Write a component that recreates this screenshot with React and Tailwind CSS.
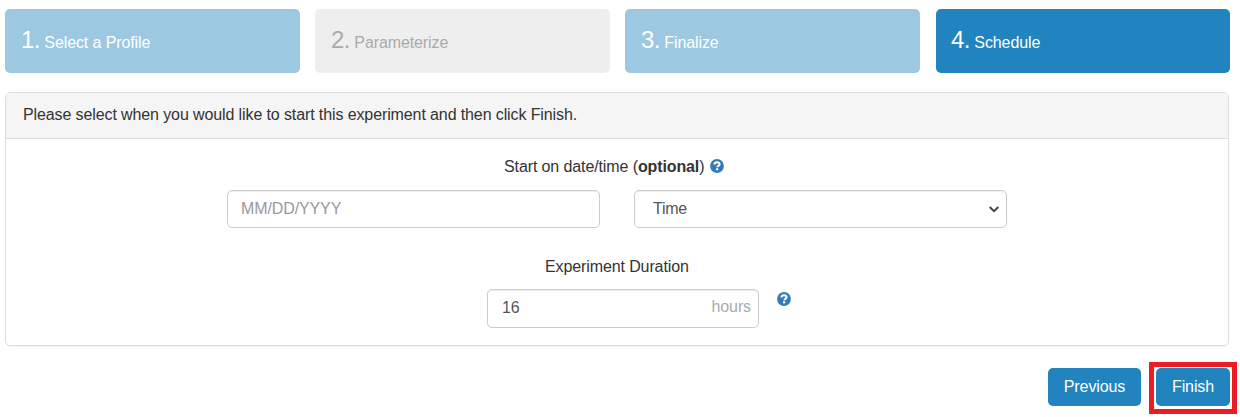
const steps = [
  { n: "1.", label: "Select a Profile", box: "w-[295px] pl-4 bg-[#9dc8e2] text-white" },
  { n: "2.", label: "Parameterize", box: "w-[295px] pl-4 bg-[#eeeeee] text-[#aaaaaa]" },
  { n: "3.", label: "Finalize", box: "w-[295px] pl-4 bg-[#9dc8e2] text-white" },
  { n: "4.", label: "Schedule", box: "ml-px w-[294px] pl-[15px] bg-[#2184be] text-white" },
];

function HelpIcon({ className }) {
  return (
    <svg viewBox="0 0 14 14" className={`size-3.5 shrink-0 ${className}`} aria-hidden="true">
      <circle cx="7" cy="7" r="6.9" fill="#337ab7" />
      <path d="M4.4 5.6C4.4 4 5.5 3.3 7 3.3c1.5 0 2.6.7 2.6 1.9 0 1.4-2.2 1.5-2.2 3.1" fill="none" stroke="#fff" strokeWidth="2" />
      <path d="M6 9.2h2.2v2.1H6z" fill="#fff" />
    </svg>
  );
}

const field =
  "rounded-[5px] border border-[#cccccc] bg-white shadow-[inset_0_1px_1px_rgba(0,0,0,0.075)]";

export default function App() {
  return (
    <div className="h-[417px] w-[1240px] overflow-hidden bg-white pt-[9px] pl-[5px] font-['Liberation_Sans',Arial,sans-serif] text-base leading-[22px] tracking-[-0.11px] text-[#333333]">
      <div className="flex gap-[15px]">
        {steps.map((s) => (
          <div key={s.n} className={`h-16 rounded-[5px] pt-[15px] leading-8 whitespace-nowrap ${s.box}`}>
            <span className="text-2xl leading-8 tracking-[-0.5px]">{s.n}</span> {s.label}
          </div>
        ))}
      </div>

      <div className="mt-[19px] h-[254px] w-[1224px] overflow-hidden rounded-[5px] border border-[#dddddd] shadow-[0_1px_1px_rgba(0,0,0,0.05)]">
        <div className="h-[46px] border-b border-[#dddddd] bg-[#f5f5f5] pt-[11px] pl-[17px]">
          Please select when you would like to start this experiment and then click Finish.
        </div>
        <div className="flex flex-col">
          <div className="mt-[17px] flex h-[22px] pl-[498px]">
            <span className="w-[201px] whitespace-nowrap">
              Start on date/time (<b>optional</b>)
            </span>
            <HelpIcon className="mt-[3px] ml-[5px]" />
          </div>
          <div className="mt-3 flex gap-[34px] pl-[221px]">
            <input
              placeholder="MM/DD/YYYY"
              className={`h-[38px] w-[373px] px-[13px] pb-px outline-none placeholder:text-[#999999] ${field}`}
            />
            <div className={`flex h-[38px] w-[373px] items-start justify-between pt-[7px] pr-[7px] pl-[18px] text-[#555555] ${field}`}>
              <span className="tracking-[-0.25px]">Time</span>
              <svg viewBox="0 0 10 7" className="mt-[8px] h-[7px] w-2.5" fill="none" stroke="#444444" strokeWidth="2">
                <path d="M.7 1 5 5.2 9.3 1" />
              </svg>
            </div>
          </div>
          <div className="mt-7 h-[22px] pl-[539px]">Experiment Duration</div>
          <div className="mt-[11px] flex pl-[481px]">
            <div className={`flex h-[39px] w-[272px] justify-between pt-[7px] pr-[7px] pl-[14px] text-[#555555] ${field}`}>
              <span>16</span>
              <span className="-mt-px text-[#aaaaaa]">hours</span>
            </div>
            <HelpIcon className="mt-[3px] ml-[18px]" />
          </div>
        </div>
      </div>

      <div className="mt-4 flex items-start pl-[1043px] text-white">
        <button className="mt-1.5 h-[38px] w-[93px] rounded-[5px] bg-[#2184be] pb-px">Previous</button>
        <div className="ml-2 h-[52px] w-[88px] border-5 border-[#ed1c24] pt-px pl-0.5">
          <button className="h-[38px] w-[74px] rounded-[5px] bg-[#2184be] pb-px">Finish</button>
        </div>
      </div>
    </div>
  );
}
